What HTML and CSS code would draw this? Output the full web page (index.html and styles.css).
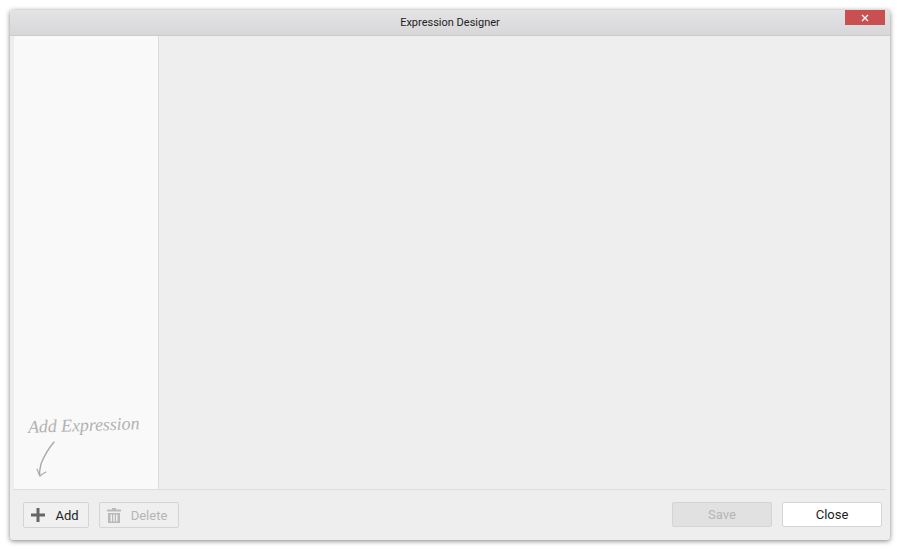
FILE: index.html
```html
<!DOCTYPE html>
<html lang="en">
<head>
<meta charset="utf-8">
<title>Expression Designer</title>
<link rel="stylesheet" href="styles.css">
</head>
<body>
<div class="window">
  <header class="titlebar">
    <span class="title">Expression Designer</span>
    <button class="close-x" aria-label="Close">
      <svg width="8" height="8" viewBox="0 0 8 8"><path d="M1 1l6 6M7 1L1 7" stroke="#fff" stroke-width="1.3" fill="none"/></svg>
    </button>
  </header>
  <main class="content">
    <aside class="sidebar">
      <div class="hint">
        <span class="hint-text">Add Expression</span>
        <svg class="hint-arrow" width="20" height="36" viewBox="0 0 20 36"><path d="M18 1C13 7 8 15 5 23C4 27 3.500 30 3.500 34" stroke="#aaa" stroke-width="1.400" fill="none" stroke-linecap="round"/><path d="M1 28C2 31 3 33 4 35C6 33 8 32 10 31" stroke="#aaa" stroke-width="1.100" fill="none" stroke-linecap="round"/></svg>
      </div>
    </aside>
    <section class="main-pane"></section>
  </main>
  <footer class="footer">
    <div class="group">
      <button class="btn btn-add">
        <svg width="14" height="14" viewBox="0 0 14 14"><path d="M5.500 0h3v5.500H14v3H8.500V14h-3V8.500H0v-3h5.500z" fill="#666"/></svg>
        <span class="label">Add</span>
      </button>
      <button class="btn btn-delete" disabled>
        <svg width="14" height="15" viewBox="0 0 14 15"><path d="M5 0h4v1.500h5V3.500H0V1.500h5zM1 5h12v10H1zM3.500 6.500v7h1.500v-7zM6.250 6.500v7h1.500v-7zM9 6.500v7h1.500v-7z" fill="#b9b9b9" fill-rule="evenodd"/></svg>
        <span class="label">Delete</span>
      </button>
    </div>
    <div class="group group-right">
      <button class="btn btn-save" disabled>Save</button>
      <button class="btn btn-close">Close</button>
    </div>
  </footer>
</div>
</body>
</html>
```
FILE: styles.css
```css
* { box-sizing: border-box; }
html, body { margin: 0; height: 100%; }
body {
  background: #fff;
  padding: 10px 10px 9px;
  font-family: Roboto, "Liberation Sans", sans-serif;
  font-size: 12px;
  color: #222;
}
.window {
  width: 880px;
  height: 530px;
  display: flex;
  flex-direction: column;
  background: #eeeeee;
  border-radius: 3px;
  box-shadow: 0 1px 5px rgba(0,0,0,.5);
  overflow: hidden;
}
.titlebar {
  height: 26px;
  flex: none;
  position: relative;
  display: flex;
  align-items: center;
  justify-content: center;
  background: linear-gradient(#e4e3e5, #d7d6d8);
  border-bottom: 1px solid #cbcbcb;
}
.title { font-size: 11px; color: #222; }
.close-x {
  position: absolute;
  top: 0;
  right: 5px;
  width: 40px;
  height: 15px;
  padding: 0;
  border: 0;
  background: #c95050;
  display: flex;
  align-items: center;
  justify-content: center;
}
.content { flex: 1; display: flex; min-height: 0; }
.sidebar {
  width: 145px;
  margin-left: 4px;
  background: #f9f9f9;
  border-radius: 2px;
  border-right: 1px solid #dcdcdc;
  display: flex;
  flex-direction: column;
  justify-content: flex-end;
  padding: 0 0 12px 14px;
}
.main-pane { flex: 1; }
.hint { display: flex; flex-direction: column; align-items: flex-start; }
.hint-text {
  font-family: "Liberation Serif", serif;
  font-style: italic;
  font-size: 18px;
  line-height: 22px;
  letter-spacing: -.1px;
  white-space: nowrap;
  color: #b2b2b2;
  transform: rotate(-2deg);
  transform-origin: left center;
}
.hint-arrow { margin: 3px 0 0 8px; }
.footer {
  height: 51px;
  flex: none;
  margin: 0 4px;
  border-top: 1px solid #dedede;
  display: flex;
  justify-content: space-between;
  padding: 12px 4px 0 9px;
}
.group { display: flex; gap: 10px; align-items: flex-start; }
.btn {
  height: 25px;
  border: 1px solid #d4d4d4;
  border-radius: 2px;
  background: #f3f3f3;
  font: inherit;
  font-size: 13px;
  color: #222;
  padding: 0;
  display: flex;
  align-items: center;
  justify-content: center;
}
.label { padding-top: 1px; }
.btn-add { width: 66px; height: 26px; gap: 10px; padding-right: 2px; background: #f0f0f0; }
.btn-delete { width: 80px; height: 26px; gap: 10px; padding-right: 4px; color: #b5b5b5; background: #efefef; }
.btn-save { width: 100px; background: #e1e1e1; color: #b5b5b5; }
.btn-close { width: 100px; background: #fff; }
```
